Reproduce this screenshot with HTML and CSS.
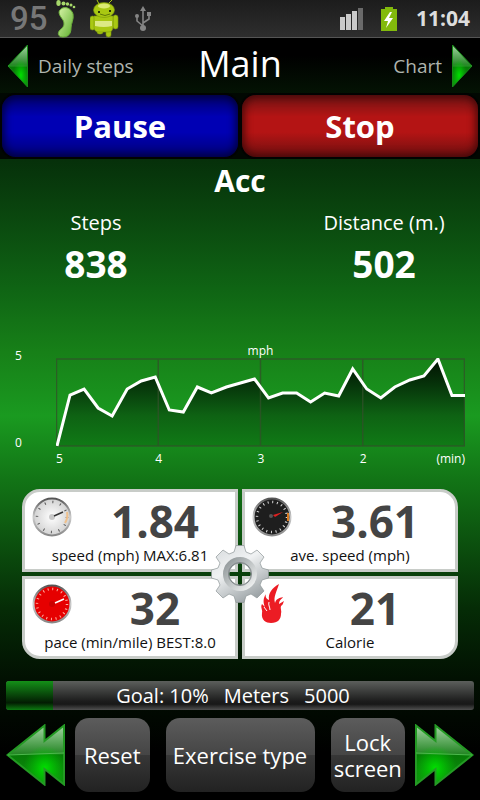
FILE: index.html
```html
<!DOCTYPE html>
<html lang="en">
<head>
<meta charset="utf-8">
<meta name="viewport" content="width=device-width, initial-scale=1">
<title>Main</title>
<link rel="stylesheet" href="styles.css">
</head>
<body>
<svg class="defs" width="0" height="0" aria-hidden="true">
  <defs>
    <linearGradient id="arrowTop" x1="0" y1="0" x2="0" y2="1">
      <stop offset="0" stop-color="#a4d4a4"/><stop offset="0.25" stop-color="#62ac62"/><stop offset="0.48" stop-color="#268626"/><stop offset="0.5" stop-color="#067a06"/><stop offset="1" stop-color="#109410"/>
    </linearGradient>
    <radialGradient id="arrowGlow" cx="0.66" cy="0.72" r="0.38">
      <stop offset="0" stop-color="#00e000"/><stop offset="1" stop-color="#00c800" stop-opacity="0"/>
    </radialGradient>
    <linearGradient id="silver" x1="0" y1="0" x2="0.6" y2="1">
      <stop offset="0" stop-color="#d4d8da"/><stop offset="0.45" stop-color="#f0f2f3"/><stop offset="1" stop-color="#9ea5a8"/>
    </linearGradient>
    <linearGradient id="silverInner" x1="0" y1="0" x2="1" y2="1">
      <stop offset="0" stop-color="#8f9698"/><stop offset="1" stop-color="#f2f4f4"/>
    </linearGradient>
    <linearGradient id="rim" x1="0" y1="0" x2="0" y2="1">
      <stop offset="0" stop-color="#555"/><stop offset="0.5" stop-color="#ccc"/><stop offset="1" stop-color="#888"/>
    </linearGradient>
    <radialGradient id="faceWhite"><stop offset="0" stop-color="#fff"/><stop offset="1" stop-color="#d2d2d2"/></radialGradient>
  </defs>
</svg>
<div class="app">
  <header class="status">
    <span class="level">95</span>
    <svg class="foot" width="20" height="38" viewBox="0 0 20 38" aria-hidden="true">
      <defs><linearGradient id="footFill" x1="0" y1="0" x2="1" y2="1"><stop offset="0" stop-color="#d8f4a8"/><stop offset="1" stop-color="#5cae2c"/></linearGradient></defs>
      <path d="M5 9C9 6 15 8 17 14C18 20 15 23 15 28C15 34 12 37 7 37C2 37 1 33 4 30C8 27 9 24 7 20C4 16 1 12 5 9Z" fill="url(#footFill)" stroke="#6db33a"/>
      <g fill="#a6d86a"><ellipse cx="2.500" cy="3" rx="2.200" ry="3"/><circle cx="7.500" cy="3.500" r="2"/><circle cx="11.500" cy="4" r="1.700"/><circle cx="15" cy="5" r="1.500"/><circle cx="18" cy="7" r="1.300"/></g>
    </svg>
    <svg class="robot" width="30" height="38" viewBox="0 0 30 38" aria-hidden="true">
      <g fill="#a9c812" stroke="#7c970c" stroke-width=".6"><rect x="0" y="16" width="5" height="14" rx="2.500"/><rect x="23" y="15" width="5" height="14" rx="2.500"/><path d="M7 29h6v3a3 2 0 0 1-6 0ZM16 29h5v6a2.500 2 0 0 1-5 0Z"/><path d="M4 16H23V27Q23 32 18 32H9Q4 32 4 27Z"/><ellipse cx="14" cy="10" rx="10.500" ry="7.500"/></g>
      <path d="M9 4L7 0M19 3L22 0" stroke="#a9c812"/><circle cx="9" cy="12" r="1"/><circle cx="20" cy="11" r="1"/><path d="M10 14q5 3 10 0" fill="none" stroke="#5f7808"/>
      <path d="M5 21h17v5q-8 2-17 0Z" fill="#dce985"/><ellipse cx="14" cy="6" rx="6" ry="2.500" fill="#dcea72"/>
    </svg>
    <svg class="usb" width="18" height="26" viewBox="0 0 18 26" aria-hidden="true">
      <g fill="none" stroke="#858585" stroke-width="1.600"><path d="M9 4v18M9 20L3 15v-4M9 17l6-4V9"/></g>
      <path d="M9 0l3 5H6Z" fill="#858585"/><circle cx="9" cy="22" r="3" fill="#858585"/><circle cx="3" cy="10" r="2" fill="#858585"/><path d="M13 6h4v4h-4Z" fill="#858585"/>
    </svg>
    <svg class="signal" width="24" height="22" viewBox="0 0 24 22" aria-hidden="true">
      <path d="M0 9h5v13H0ZM6 6h5v16H6ZM12 3h5v19h-5Z" fill="#c9c9c9"/><path d="M18 0h5v22h-5Z" fill="#6a6a6a"/>
    </svg>
    <svg class="battery" width="18" height="24" viewBox="0 0 18 24" aria-hidden="true">
      <path d="M5 2V0h8v2h4v22H1V2Z" fill="#82ba0c"/><path d="M10 5L4 14h4l-2 7 7-10H9l3-6Z" fill="#fff"/>
    </svg>
    <time class="clock">11:04</time>
  </header>

  <nav class="nav">
    <a class="nav-link" href="#daily"><svg width="22" height="44" viewBox="0 0 22 44" aria-hidden="true"><path d="M1 22L20.500 1v42Z" fill="url(#arrowTop)"/><path d="M1 22L20.500 1v42Z" fill="url(#arrowGlow)" stroke="#168a16"/><path d="M1 22h19" stroke="#3ca83c" stroke-width=".7"/></svg><span>Daily steps</span></a>
    <h1>Main</h1>
    <a class="nav-link next" href="#chart"><span>Chart</span><svg class="flip" width="22" height="44" viewBox="0 0 22 44" aria-hidden="true"><path d="M1 22L20.500 1v42Z" fill="url(#arrowTop)"/><path d="M1 22L20.500 1v42Z" fill="url(#arrowGlow)" stroke="#168a16"/><path d="M1 22h19" stroke="#3ca83c" stroke-width=".7"/></svg></a>
  </nav>

  <div class="actions">
    <button class="pause" type="button">Pause</button>
    <button class="stop" type="button">Stop</button>
  </div>

  <main>
    <h2>Acc</h2>
    <dl class="totals">
      <div><dt>Steps</dt><dd>838</dd></div>
      <div><dt>Distance (m.)</dt><dd>502</dd></div>
    </dl>

    <figure class="chart">
      <figcaption>mph</figcaption>
      <div class="y-axis"><span>5</span><span>0</span></div>
      <svg class="plot" viewBox="0 0 408 90" preserveAspectRatio="none" role="img" aria-label="Speed in mph over the last five minutes">
        <defs><linearGradient id="area" gradientUnits="userSpaceOnUse" x1="0" y1="0" x2="0" y2="88"><stop offset="0" stop-color="#021002"/><stop offset="0.3" stop-color="#06330a"/><stop offset="0.65" stop-color="#0e6213"/><stop offset="1" stop-color="#107a16"/></linearGradient></defs>
        <path d="M0 88L14 37 28 31 42 50 56 58 71 31 85 23 99 19 113 52 127 54 141 29 155 35 170 29 184 25 198 21 212 40 226 35 240 35 254 44 268 35 282 38 296 11 310 31 324 40 338 29 353 22 367 18 381 1 395 37.500H408V88Z" fill="url(#area)"/>
        <path d="M.5 1H407.500V88H.5ZM102 1v87M204 1v87M306 1v87" fill="none" stroke="#32502a" stroke-opacity=".75" stroke-width="1.500"/>
        <path d="M1 88L14 37 28 31 42 50 56 58 71 31 85 23 99 19 113 52 127 54 141 29 155 35 170 29 184 25 198 21 212 40 226 35 240 35 254 44 268 35 282 38 296 11 310 31 324 40 338 29 353 22 367 18 381 1 395 37.500H408" fill="none" stroke="#fff" stroke-width="3"/>
      </svg>
      <div class="x-axis"><span>5</span><span>4</span><span>3</span><span class="last-tick"><span>2</span><span>(min)</span></span></div>
    </figure>

    <section class="cards" aria-label="Statistics">
      <article class="card">
        <svg class="icon" width="40" height="40" viewBox="0 0 40 40" aria-hidden="true"><circle cx="20" cy="20" r="18.500" fill="url(#faceWhite)" stroke="url(#rim)" stroke-width="2"/><circle cx="20" cy="20" r="15" fill="none" stroke="#555" stroke-width="2.500" stroke-dasharray="1 6.850"/><path d="M35 15a15 15 0 0 1-2 11" fill="none" stroke="#efc08c" stroke-width="2"/><circle cx="20" cy="20" r="3" fill="#c8c8c8"/><path d="M22 19l9-4" stroke="#333" stroke-width="1.500"/></svg>
        <strong>1.84</strong><p>speed (mph) MAX:6.81</p>
      </article>
      <article class="card">
        <svg class="icon" width="40" height="40" viewBox="0 0 40 40" aria-hidden="true"><circle cx="20" cy="20" r="18.500" fill="#1e1e1e" stroke="url(#rim)" stroke-width="2"/><circle cx="20" cy="20" r="15" fill="none" stroke="#ddd" stroke-width="2.500" stroke-dasharray="1 3.700"/><path d="M36 16v8" stroke="#d87820" stroke-width="2"/><circle cx="19" cy="19" r="2" fill="#555"/><path d="M21 18l10-3-8 5Z" fill="#e02020"/></svg>
        <strong>3.61</strong><p>ave. speed (mph)</p>
      </article>
      <article class="card">
        <svg class="icon" width="40" height="40" viewBox="0 0 40 40" aria-hidden="true"><circle cx="20" cy="20" r="18.500" fill="#e60000" stroke="url(#rim)" stroke-width="2"/><circle cx="20" cy="20" r="15" fill="none" stroke="#ffb0a0" stroke-width="2.500" stroke-dasharray="1 3.700"/><circle cx="20" cy="20" r="3" fill="#c00"/><path d="M23 19l9-4" stroke="#fff" stroke-width="1.500"/></svg>
        <strong>32</strong><p>pace (min/mile) BEST:8.0</p>
      </article>
      <article class="card">
        <svg class="icon" width="40" height="40" viewBox="0 0 40 40" aria-hidden="true"><path d="M27 0C20 4 16 9 17 16C14 15 13 12 14 10C11 14 11 19 13 23L10 20C8 23 11 26 10 29C9 36 14 39 19 39C26 39 29 35 29 30C30 27 28 24 29 22C31 21 31 19 32 17L27 20C27 16 30 15 31 13C27 14 24 15 23 19C21 13 25 7 27 0Z" fill="#ec1c24"/><path d="M17 18c-1 3 1 5 1 8M12 23l3 4" fill="none" stroke="#fff"/></svg>
        <strong>21</strong><p>Calorie</p>
      </article>
      <button class="gear" type="button" aria-label="Settings">
        <svg width="58" height="58" viewBox="-29 -29 58 58" aria-hidden="true">
          <path fill-rule="evenodd" fill="url(#silver)" stroke="#8e9698" stroke-width=".7" d="M-6-22L-4-28.500H4L6-22L11-20L17-24L24-17L20-11L22-6L28.500-4V4L22 6L20 11L24 17L17 24L11 20L6 22L4 28.500H-4L-6 22L-11 20L-17 24L-24 17L-20 11L-22 6L-28.500 4V-4L-22-6L-20-11L-24-17L-17-24L-11-20ZM0-11A11 11 0 1 0 0 11A11 11 0 1 0 0-11Z"/>
          <circle r="14" fill="none" stroke="url(#silverInner)" stroke-width="6"/><circle r="11.500" fill="none" stroke="#7c8385"/>
        </svg>
      </button>
    </section>
  </main>

  <footer>
    <div class="goal"><div class="goal-fill" style="width:10%"></div><span>Goal: 10%</span><span>Meters</span><span>5000</span></div>
    <div class="toolbar">
      <button class="arrow" type="button" aria-label="Previous"><svg width="60" height="62" viewBox="0 0 60 62" aria-hidden="true"><path d="M1.500 31L38.500 1.500V17L58 1.500V60.500L38.500 45V60.500Z" fill="url(#arrowTop)"/><path d="M1.500 31L38.500 1.500V17L58 1.500V60.500L38.500 45V60.500Z" fill="url(#arrowGlow)" stroke="#249a24" stroke-width="2"/><path d="M2 31L58 29" stroke="#4cb84c"/></svg></button>
      <div class="tools">
        <button class="tool" type="button">Reset</button>
        <button class="tool" type="button">Exercise type</button>
        <button class="tool" type="button">Lock screen</button>
      </div>
      <button class="arrow" type="button" aria-label="Next"><svg class="flip" width="60" height="62" viewBox="0 0 60 62" aria-hidden="true"><path d="M1.500 31L38.500 1.500V17L58 1.500V60.500L38.500 45V60.500Z" fill="url(#arrowTop)"/><path d="M1.500 31L38.500 1.500V17L58 1.500V60.500L38.500 45V60.500Z" fill="url(#arrowGlow)" stroke="#249a24" stroke-width="2"/><path d="M2 31L58 29" stroke="#4cb84c"/></svg></button>
    </div>
  </footer>
</div>
</body>
</html>
```

FILE: styles.css
```css
* { box-sizing: border-box; margin: 0; padding: 0; }
html, body { height: 100%; }
body { background: #000; color: #fff; font-family: "Open Sans", "Noto Sans", sans-serif; }
button { border: 0; color: inherit; font-family: inherit; }
svg { display: block; }
.defs { position: absolute; }
.app {
  min-height: 100vh;
  display: flex;
  flex-direction: column;
  background: linear-gradient(#000 7%, #041404 12%, #06300a 20%, #0f6414 36%, #178018 44%, #1a9a20 52%, #127416 60%, #052c06 76%, #021002 85%, #000 94%);
}
main { flex: 1; }

.status { display: flex; align-items: center; height: 38px; padding: 0 10px; background: linear-gradient(#1c1c1c, #2e2e2e); border-bottom: 1px solid #555; }
.level { width: 46px; color: #777; font: 500 33px/37px Roboto, sans-serif; }
.robot { margin-left: 14px; }
.usb { margin-left: 14px; }
.signal { margin-left: auto; }
.battery { margin-left: 16px; }
.clock { margin-left: 18px; color: #ddd; font-size: 21px; line-height: 37px; font-weight: 700; }

.nav { display: grid; grid-template-columns: 1fr auto 1fr; align-items: center; height: 55px; padding: 0 7px; }
.nav-link { display: flex; align-items: center; gap: 9px; color: #aeb4ae; text-decoration: none; font-size: 19px; }
.next { justify-content: flex-end; }
h1 { font-size: 36px; line-height: 50px; padding-bottom: 4px; font-weight: 400; }

.actions { display: grid; grid-template-columns: 1fr 1fr; background: #010802; }
.actions button { height: 66px; border: 2px solid #020302; border-radius: 16px; font-size: 31px; font-weight: 700; }
.actions .pause { background: linear-gradient(#00006c, #0000b4 35%, #0000b4 60%, #000078); box-shadow: inset 0 0 8px 2px #000038; }
.actions .stop { background: linear-gradient(#701414, #b41414 35%, #b41414 60%, #701010); box-shadow: inset 0 0 8px 2px #400808; }

h2 { text-align: center; font-size: 30px; line-height: 44px; }
.totals { display: grid; grid-template-columns: 2fr 1fr 2fr; text-align: center; }
.totals div:last-child { grid-column: 3; }
dt { font-size: 20px; line-height: 40px; }
dd { font-size: 37px; line-height: 42px; font-weight: 700; }

.chart { display: grid; grid-template-columns: 41px 1fr; padding: 58px 15px 0; font-size: 12px; line-height: 15px; }
figcaption { grid-column: 2; text-align: center; }
.y-axis { display: flex; flex-direction: column; justify-content: space-between; margin: -12px 0 -2px; padding-top: 2px; }
.plot { width: 100%; height: 90px; }
.x-axis { grid-column: 2; display: grid; grid-template-columns: repeat(4, 1fr); padding-top: 3px; }
.x-axis > span + span { margin-left: -3px; }
.last-tick { display: flex; justify-content: space-between; }

.cards { position: relative; display: grid; grid-template-columns: 1fr 1fr; gap: 4px; padding: 23px 22px 0; }
.card { position: relative; height: 83px; border: 3px solid #c8ccc8; background: #fff; color: #111; text-align: center; }
.card:nth-child(1) { border-top-left-radius: 18px; }
.card:nth-child(2) { border-top-right-radius: 18px; }
.card:nth-child(3) { border-bottom-left-radius: 18px; }
.card:nth-child(4) { border-bottom-right-radius: 18px; }
.icon { position: absolute; left: 7px; top: 5px; }
.card strong { display: block; padding: 3px 0 0 50px; color: #444; font-size: 44px; line-height: 52px; }
.card p { font-size: 15px; line-height: 16px; }
.gear { position: absolute; left: calc(50% - 29px); top: 79px; background: none; }

.goal { position: relative; display: flex; justify-content: center; gap: 15px; margin: 0 6px; padding-right: 14px; height: 29px; border-radius: 3px; overflow: hidden; background: linear-gradient(#5c5f5c, #1c1c1c 70%, #181818 80%, #505050); font-size: 20px; line-height: 30px; }
.goal span { position: relative; }
.goal-fill { position: absolute; left: 0; top: 0; height: 100%; background: linear-gradient(#149018, #021c02 75%, #0c7a10); }
.toolbar { display: flex; align-items: center; gap: 9px; padding: 8px 6px; }
.arrow { background: none; }
.flip { transform: scaleX(-1); }
.tools { flex: 1; display: grid; grid-template-columns: 1fr 2fr 1fr; gap: 16px; }
.tool { height: 74px; border-radius: 14px; background: linear-gradient(#5c5c5c, #454545 50%, #373737 50%, #222); font-size: 22px; line-height: 26px; }
```
